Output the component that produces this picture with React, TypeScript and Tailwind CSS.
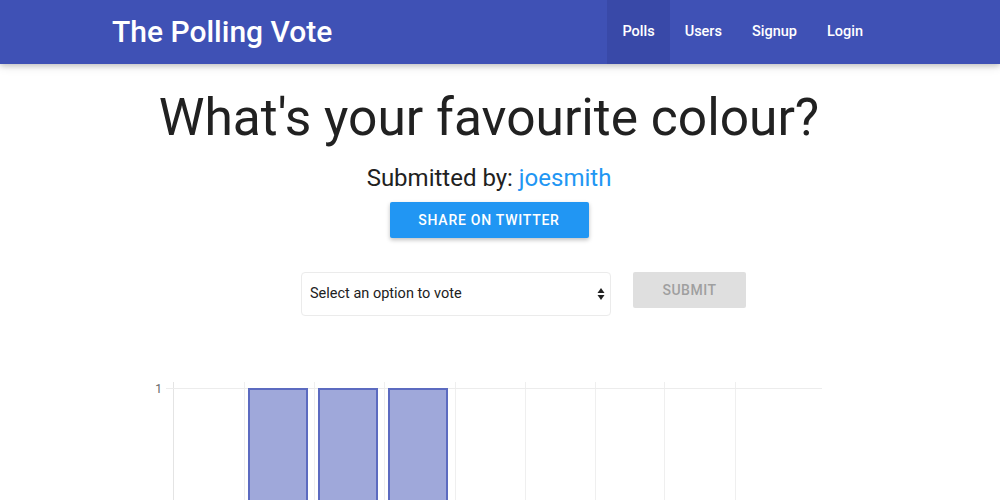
import React from "react";

const NAV = ["Polls", "Users", "Signup", "Login"];

// x positions of the vertical grid lines, measured off the chart
const GRID_X = [173, 244, 314, 384, 455, 525, 595, 664, 735];
const BARS = [249, 319, 389];

const Chart: React.FC = () => (
  <svg width="1000" height="160" viewBox="0 360 1000 160" className="block">
    {GRID_X.map((x) => (
      <line key={x} x1={x + 0.5} y1={382} x2={x + 0.5} y2={520} stroke={x === 173 ? "#e4e4e4" : "#efefef"} strokeWidth="1" />
    ))}
    <line x1={166} y1={388.5} x2={822} y2={388.5} stroke="#ececec" strokeWidth="1" />
    <text x={162} y={393} textAnchor="end" fontSize="12" fill="#666666" fontFamily="Roboto, sans-serif">
      1
    </text>
    {BARS.map((x) => (
      <rect key={x} x={x} y={389} width={58} height={140} fill="#9fa8da" stroke="#5c6bc0" strokeWidth="2" />
    ))}
  </svg>
);

export default function App() {
  return (
    <div className="w-[1000px] h-[500px] overflow-hidden bg-white" style={{ fontFamily: "Roboto, 'Liberation Sans', sans-serif" }}>
      <nav className="h-16 bg-[#3f51b5] shadow-[0_2px_5px_rgba(0,0,0,0.16),0_2px_10px_rgba(0,0,0,0.12)] relative z-10">
        <div className="flex items-center justify-between h-full pl-[112px] pr-[122px]">
          <span className="text-white text-[30px] font-medium leading-none">The Polling Vote</span>
          <ul className="flex h-full">
            {NAV.map((n, i) => (
              <li
                key={n}
                className={`flex items-center h-full px-[15px] text-white text-[14.5px] font-medium ${i === 0 ? "bg-[#3949a8]" : ""}`}
              >
                {n}
              </li>
            ))}
          </ul>
        </div>
      </nav>

      <main className="flex flex-col items-center pr-[22px]">
        <h1 className="mt-[20px] text-[51.5px] leading-[68px] text-[#212121]">What's your favourite colour?</h1>
        <p className="mt-[11px] text-[24px] leading-[30px] text-[#212121]">
          Submitted by: <span className="text-[#2196f3]">joesmith</span>
        </p>
        <button className="mt-[9px] w-[199px] h-9 rounded-[2px] bg-[#2196f3] text-white text-[14px] font-medium tracking-[0.75px] shadow-[0_2px_4px_rgba(0,0,0,0.25)]">
          SHARE ON TWITTER
        </button>

        <div className="mt-[34px] flex items-start gap-[22px] ml-[69px]">
          <div className="w-[310px] h-[44px] rounded-[4px] border border-[#ebebeb] flex items-center justify-between pl-[8px] pr-[5px] text-[14.5px] text-[#212121]">
            <span>Select an option to vote</span>
            <svg width="8" height="14" viewBox="0 0 8 14">
              <path d="M4 1 L7.5 6 L0.5 6 Z" fill="#222" />
              <path d="M4 13 L7.5 8 L0.5 8 Z" fill="#222" />
            </svg>
          </div>
          <button className="w-[113px] h-9 rounded-[2px] bg-[#dfdfdf] text-[#9f9f9f] text-[14px] font-medium tracking-[0.5px]">
            SUBMIT
          </button>
        </div>
      </main>

      <div className="mt-[44px]">
        <Chart />
      </div>
    </div>
  );
}
